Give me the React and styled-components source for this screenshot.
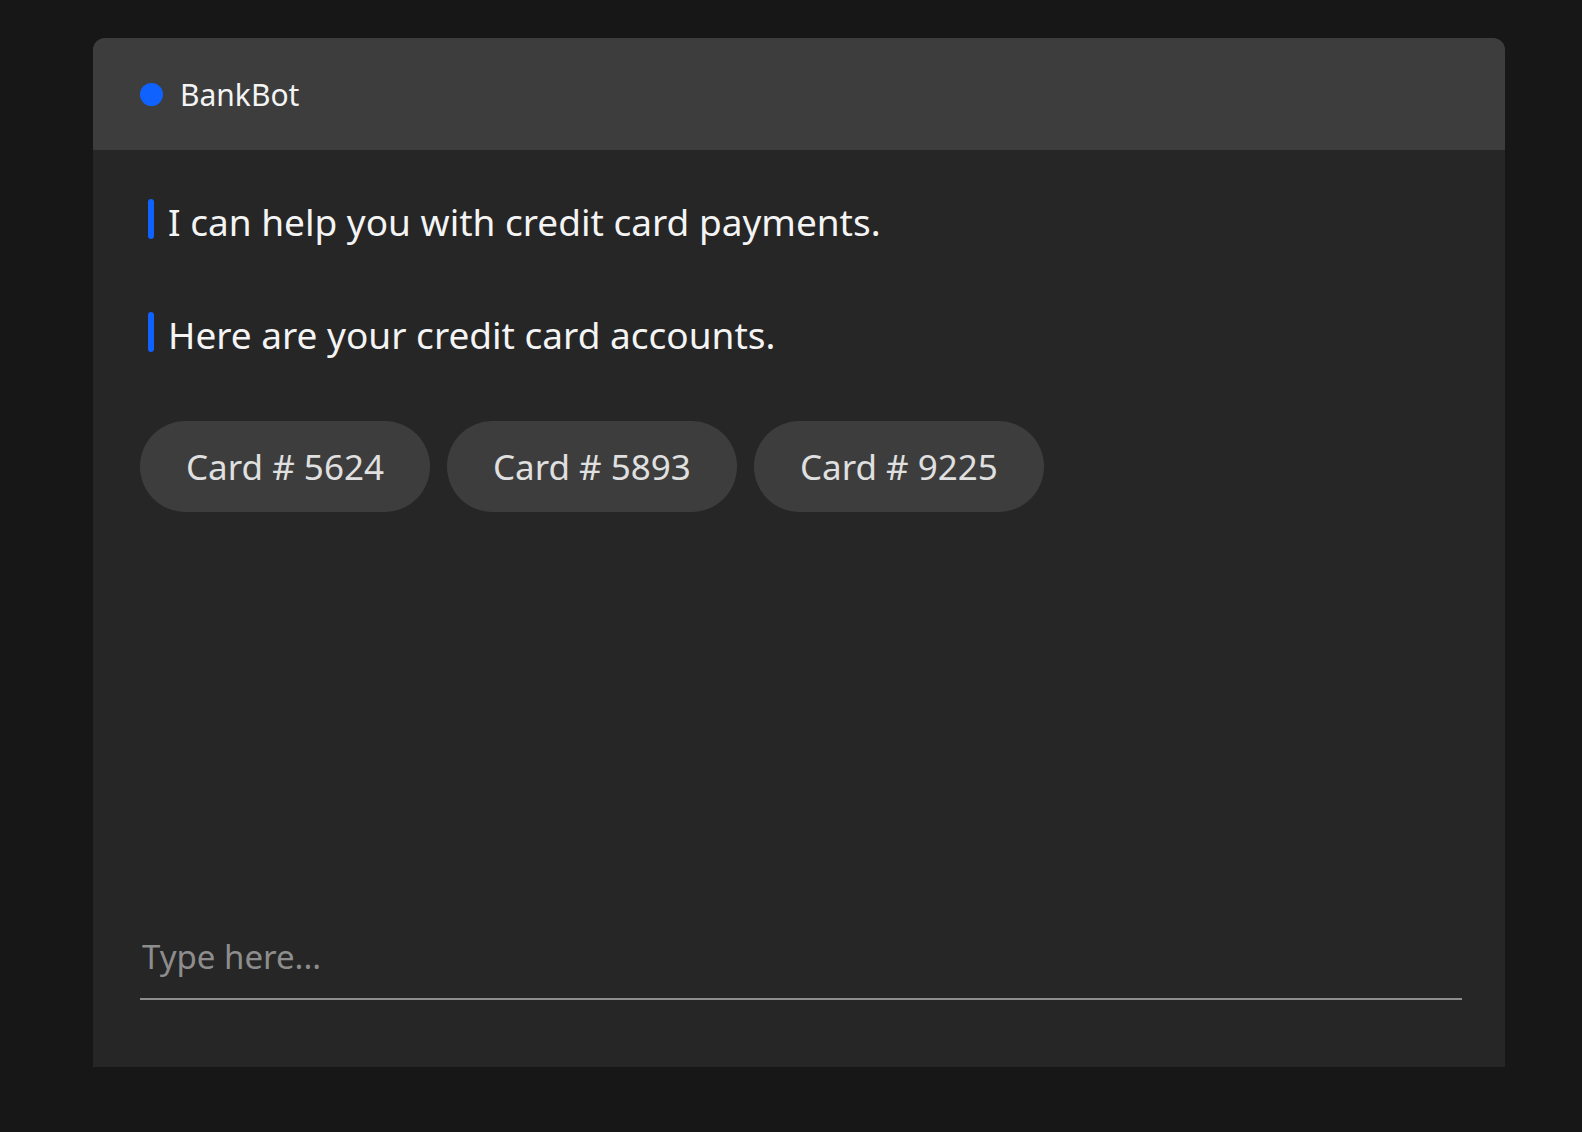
import React from "react";
import styled, { createGlobalStyle } from "styled-components";

const GlobalStyle = createGlobalStyle`
  html, body {
    margin: 0;
    padding: 0;
    background: #171717;
    font-family: "Noto Sans", "Liberation Sans", sans-serif;
  }
  * {
    box-sizing: border-box;
  }
`;

const Page = styled.div`
  padding: 38px 0 65px 93px;
`;

const ChatCard = styled.section`
  width: 1412px;
  height: 1029px;
  display: flex;
  flex-direction: column;
  background: #262626;
  border-radius: 12px 12px 0 0;
  overflow: hidden;
`;

const Header = styled.header`
  height: 112px;
  flex-shrink: 0;
  display: flex;
  align-items: center;
  gap: 17px;
  padding-left: 47px;
  background: #3d3d3d;
`;

const StatusDot = styled.span`
  width: 23px;
  height: 23px;
  border-radius: 50%;
  background: #0f62fe;
`;

const BotName = styled.h1`
  margin: 0;
  font-size: 30px;
  font-weight: 400;
  color: #f4f4f4;
`;

const Body = styled.div`
  flex: 1;
  display: flex;
  flex-direction: column;
  padding: 49px 43px 67px 47px;
`;

const Messages = styled.div`
  display: flex;
  flex-direction: column;
  gap: 73px;
  padding-left: 8px;
`;

const MessageRow = styled.div`
  display: flex;
  align-items: flex-start;
  gap: 14px;
  height: 40px;
`;

const Accent = styled.span`
  width: 6px;
  height: 40px;
  border-radius: 3px;
  background: #0f62fe;
  flex-shrink: 0;
`;

const MessageText = styled.p`
  margin: 0;
  padding-top: 3px;
  font-size: 37px;
  line-height: 40px;
  color: #f4f4f4;
  white-space: nowrap;
`;

const Chips = styled.div`
  display: flex;
  gap: 17px;
  margin-top: 69px;
`;

const Chip = styled.button`
  height: 91px;
  padding: 0 46px;
  border: none;
  border-radius: 46px;
  background: #3d3d3d;
  color: #e0e0e0;
  font-family: inherit;
  font-size: 35px;
  cursor: pointer;
`;

const InputLine = styled.input`
  margin-top: auto;
  width: 100%;
  height: 62px;
  padding: 0 2px 24px;
  border: none;
  border-bottom: 2px solid #8d8d8d;
  background: transparent;
  color: #f4f4f4;
  font-family: inherit;
  font-size: 33px;
  outline: none;

  &::placeholder {
    color: #8d8d8d;
  }
`;

const messages = [
  "I can help you with credit card payments.",
  "Here are your credit card accounts.",
];

const cards = ["5624", "5893", "9225"];

export default function App() {
  return (
    <Page>
      <GlobalStyle />
      <ChatCard>
        <Header>
          <StatusDot />
          <BotName>BankBot</BotName>
        </Header>
        <Body>
          <Messages>
            {messages.map((text) => (
              <MessageRow key={text}>
                <Accent />
                <MessageText>{text}</MessageText>
              </MessageRow>
            ))}
          </Messages>
          <Chips>
            {cards.map((num) => (
              <Chip key={num}>Card # {num}</Chip>
            ))}
          </Chips>
          <InputLine placeholder="Type here..." />
        </Body>
      </ChatCard>
    </Page>
  );
}
